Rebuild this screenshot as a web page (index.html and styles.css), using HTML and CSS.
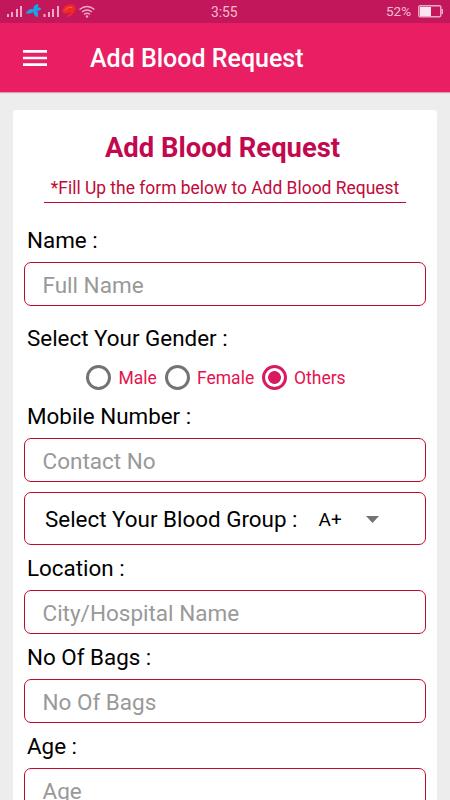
FILE: index.html
```html
<!DOCTYPE html>
<html lang="en">
<head>
<meta charset="utf-8">
<title>Add Blood Request</title>
<link rel="stylesheet" href="styles.css">
</head>
<body>
<header class="status">
  <svg class="signals" width="90" height="23" viewBox="0 0 90 23">
    <g fill="#efa9c6">
      <path d="M7 14h2v3H7zM11 12h2v5h-2zM16 9h2v8h-2zM20 6h2v11h-2z"/>
      <path d="M43.500 14h2v3h-2zM48 12h2v5h-2zM52 9h2v8h-2zM57 6h2v11h-2z"/>
    </g>
    <g fill="#18a4e8">
      <path d="M26 13.500c1-4 5-5.500 9-4-2 3.500-5 4.500-9 4z"/>
      <path d="M33.500 9.500c-.5-3 1.500-5 4.500-5.500 1 3-1 5-4.500 5.500z"/>
      <path d="M34.500 9.500c2-2.500 5-2.500 7-.5-2 2-5 2.500-7 .5z"/>
      <path d="M33.500 9c4 1 5.500 4.500 4 8.500-3.500-1.500-5-5-4-8.500z"/>
    </g>
    <path d="M62.500 12c0-5 4-8 9-7.500 4.500.5 5 5 2.500 8-2 3-5.500 4.500-8 4.500 1-1.500 4.500-3 5-5.500-3 2-5.500 3-8.500.5z" fill="#f12a25"/>
    <path d="M65 10.500c2-3 4.500-3.500 7-3" fill="none" stroke="#ff6a4a"/>
    <g fill="none" stroke="#efa9c6" stroke-width="1.400">
      <path d="M79.500 9.500q7.500-6 15 0"/>
      <path d="M82 12q5-4 10 0M84 14.500q3-2.500 6 0"/>
    </g>
    <circle cx="87" cy="16.500" r="1.200" fill="#efa9c6"/>
  </svg>
  <span class="clock">3:55</span>
  <span class="percent">52%</span>
  <svg class="battery" width="26" height="13" viewBox="0 0 26 13">
    <rect x=".8" y=".8" width="22" height="11" rx="1.500" fill="none" stroke="#efa9c6" stroke-width="1.500"/>
    <path d="M2 2h11v9H2z" fill="#fbe6ef"/>
    <path d="M23.500 4H25v5h-1.500z" fill="#efa9c6"/>
  </svg>
</header>
<nav class="toolbar">
  <svg class="menu" width="24" height="16" viewBox="0 0 24 16"><path d="M0 0h24v2.700H0zM0 6.700h24v2.600H0zM0 13.300h24V16H0z" fill="#fff"/></svg>
  <span class="toolbar-title">Add Blood Request</span>
</nav>
<main class="card">
  <h1 class="title">Add Blood Request</h1>
  <p class="subtitle"><span>*Fill Up the form below to Add Blood Request</span></p>
  <label class="label first" for="name">Name :</label>
  <input class="field" id="name" placeholder="Full Name">
  <div class="label gender">Select Your Gender :</div>
  <div class="radios">
    <span class="radio"><i class="dot"></i><span class="t-male">Male</span></span>
    <span class="radio"><i class="dot"></i><span class="t-female">Female</span></span>
    <span class="radio"><i class="dot on"></i><span class="t-others">Others</span></span>
  </div>
  <label class="label" for="mobile">Mobile Number :</label>
  <input class="field" id="mobile" placeholder="Contact No">
  <div class="group">
    <span class="group-label">Select Your Blood Group :</span>
    <span class="group-value">A+</span>
    <svg class="caret" width="13" height="7" viewBox="0 0 13 7"><path d="M0 0h13L6.500 7z" fill="#737373"/></svg>
  </div>
  <label class="label tall" for="location">Location :</label>
  <input class="field" id="location" placeholder="City/Hospital Name">
  <label class="label tall" for="bags">No Of Bags :</label>
  <input class="field" id="bags" placeholder="No Of Bags">
  <label class="label tall" for="age">Age :</label>
  <input class="field" id="age" placeholder="Age">
</main>
</body>
</html>
```
FILE: styles.css
```css
* { box-sizing: border-box; }
body {
  margin: 0;
  height: 800px;
  overflow: hidden;
  background: #ededed;
  color: #000;
  font-family: Roboto, "Liberation Sans", sans-serif;
}
.status {
  display: flex;
  align-items: center;
  height: 23px;
  background: #c2185b;
  color: #f3bdd3;
  font-size: 13.8px;
}
.signals { overflow: visible; }
.clock { margin-left: 121px; width: 28px; white-space: nowrap; }
.percent { margin: -1px 0 0 147px; width: 27px; font-size: 13.5px; }
.battery { margin-left: 5px; }
.toolbar {
  display: flex;
  align-items: center;
  height: 69px;
  padding: 0 23px;
  background: #e91e63;
  box-shadow: 0 1px 1px #d9a0b3;
  color: #fff;
}
.toolbar-title {
  margin: 2px 0 0 43px;
  font-size: 25px;
  font-weight: 500;
  white-space: nowrap;
}
.card {
  width: 424px;
  height: 720px;
  margin: 18px 0 0 13px;
  padding: 0 11px;
  border-radius: 3px 3px 0 0;
  background: #fff;
}
.title {
  margin: 0;
  padding: 21px 5px 0 0;
  height: 64px;
  color: #c2094f;
  font-size: 27.4px;
  line-height: 34px;
  font-weight: 700;
  text-align: center;
  white-space: nowrap;
}
.subtitle {
  display: flex;
  justify-content: center;
  width: 362px;
  height: 29px;
  margin: 0 auto;
  border-bottom: 1px solid #bd0737;
  color: #c00a37;
  font-size: 17.45px;
  line-height: 28px;
  white-space: nowrap;
}
.label {
  display: block;
  height: 44px;
  padding-left: 3px;
  font-size: 22.4px;
  line-height: 45px;
  white-space: nowrap;
}
.first { margin-top: 15px; }
.gender { margin-top: 11px; line-height: 43px; }
.tall { height: 45px; line-height: 47px; }
.field {
  display: block;
  width: 402px;
  height: 44px;
  padding: 2px 18px 0 17.5px;
  border: 1px solid #bd0b2c;
  border-radius: 7px;
  background: #fff;
  font: 22.5px Roboto, sans-serif;
  outline: 0;
}
.field::placeholder { color: #999; opacity: 1; }
.radios {
  display: flex;
  height: 33px;
  padding-left: 62px;
  color: #e5124d;
  font-size: 17.5px;
}
.radio { display: flex; align-items: center; gap: 7.5px; white-space: nowrap; }
.t-male { width: 46px; }
.t-female { width: 64.5px; }
.dot {
  width: 25px;
  height: 25px;
  border: 3px solid #737373;
  border-radius: 50%;
}
.dot.on {
  border-color: #d81b60;
  background: radial-gradient(circle, #d81b60 6px, transparent 6.8px);
}
.group {
  display: flex;
  align-items: center;
  height: 53px;
  margin-top: 10px;
  padding: 1px 0 0 20px;
  border: 1px solid #bd0b2c;
  border-radius: 7px;
  white-space: nowrap;
}
.group-label { width: 273.5px; font-size: 22.4px; }
.group-value { width: 47px; padding-top: 1px; font-size: 19px; }
```
